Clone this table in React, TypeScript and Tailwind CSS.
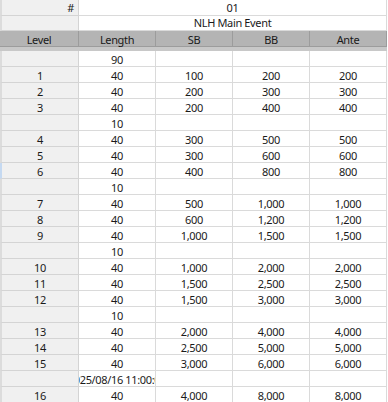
import type React from 'react';

type Row = { level?: string; length: string; sb?: string; bb?: string; ante?: string; mark?: boolean };

const rows: Row[] = [
  { length: '90' },
  { level: '1', length: '40', sb: '100', bb: '200', ante: '200' },
  { level: '2', length: '40', sb: '200', bb: '300', ante: '300' },
  { level: '3', length: '40', sb: '200', bb: '400', ante: '400' },
  { length: '10' },
  { level: '4', length: '40', sb: '300', bb: '500', ante: '500' },
  { level: '5', length: '40', sb: '300', bb: '600', ante: '600' },
  { level: '6', length: '40', sb: '400', bb: '800', ante: '800', mark: true },
  { length: '10' },
  { level: '7', length: '40', sb: '500', bb: '1,000', ante: '1,000' },
  { level: '8', length: '40', sb: '600', bb: '1,200', ante: '1,200' },
  { level: '9', length: '40', sb: '1,000', bb: '1,500', ante: '1,500' },
  { length: '10' },
  { level: '10', length: '40', sb: '1,000', bb: '2,000', ante: '2,000' },
  { level: '11', length: '40', sb: '1,500', bb: '2,500', ante: '2,500' },
  { level: '12', length: '40', sb: '1,500', bb: '3,000', ante: '3,000' },
  { length: '10' },
  { level: '13', length: '40', sb: '2,000', bb: '4,000', ante: '4,000' },
  { level: '14', length: '40', sb: '2,500', bb: '5,000', ante: '5,000' },
  { level: '15', length: '40', sb: '3,000', bb: '6,000', ante: '6,000' },
  { length: '2025/08/16 11:00:00' },
  { level: '16', length: '40', sb: '4,000', bb: '8,000', ante: '8,000' },
];

const Cell: React.FC<{ children?: React.ReactNode; className?: string }> = ({ children, className = '' }) => (
  <div
    className={`h-[16px] flex items-center justify-center overflow-hidden whitespace-nowrap border-r border-b border-[#dadada] bg-white ${className}`}
  >
    <span className="leading-[15px] pt-px">{children}</span>
  </div>
);

const LevelCell: React.FC<{ children?: React.ReactNode; mark?: boolean }> = ({ children, mark }) => (
  <div
    className={`h-[16px] flex items-center justify-center border-r border-b border-[#d4d4d4] bg-[#f0f0f0] border-l-2 ${
      mark ? 'border-l-[#c5d9f1]' : 'border-l-[#dcdcdc]'
    }`}
  >
    <span className="leading-[15px] pt-px">{children}</span>
  </div>
);

const HeadCell: React.FC<{ children: React.ReactNode }> = ({ children }) => (
  <div className="h-[16px] flex items-center justify-center border-r border-b border-[#9c9c9c] bg-[#b4b4b4]">
    <span className="leading-[15px] pt-px">{children}</span>
  </div>
);

export default function App() {
  return (
    <div
      className="w-[388px] h-[402px] overflow-hidden bg-white text-[11px] tracking-[-0.35px] text-[#1a1a1a]"
      style={{ fontFamily: '"Noto Sans", "Open Sans", sans-serif' }}
    >
      <div className="grid grid-cols-[79px_77px_77px_77px_77px]">
        {/* title rows */}
        <div className="h-[16px] flex items-center justify-end pr-[4px] border-r border-b border-[#d4d4d4] bg-[#f0f0f0] border-l-2 border-l-[#dcdcdc]">
          <span className="leading-[15px]">#</span>
        </div>
        <div className="col-span-4 h-[16px] flex items-center justify-center border-r border-b border-[#dadada] bg-white">
          <span className="leading-[15px]">01</span>
        </div>
        <div className="h-[15px] border-r border-b border-[#d4d4d4] bg-[#f0f0f0] border-l-2 border-l-[#dcdcdc]" />
        <div className="col-span-4 h-[15px] flex items-center justify-center border-r border-b border-[#dadada] bg-white">
          <span className="leading-[14px]">NLH Main Event</span>
        </div>

        {/* header */}
        {['Level', 'Length', 'SB', 'BB', 'Ante'].map((h) => (
          <HeadCell key={h}>{h}</HeadCell>
        ))}
        <div className="col-span-5 h-[4px] bg-[#c8c8c8]" />

        {rows.map((r, i) => (
          <div key={i} className="contents">
            <LevelCell mark={r.mark}>{r.level}</LevelCell>
            <Cell>{r.length}</Cell>
            <Cell>{r.sb}</Cell>
            <Cell>{r.bb}</Cell>
            <Cell>{r.ante}</Cell>
          </div>
        ))}
      </div>
    </div>
  );
}
